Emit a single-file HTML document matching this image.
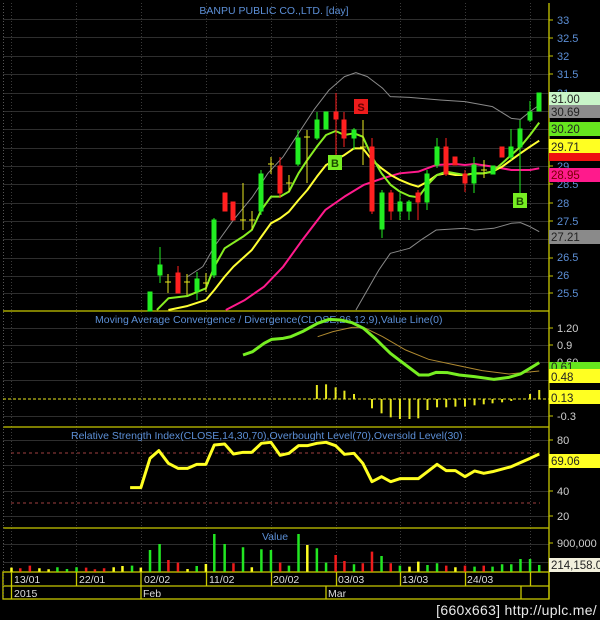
<!DOCTYPE html>
<html><head><meta charset="utf-8"><style>
html,body{margin:0;padding:0;background:#000;width:600px;height:620px;overflow:hidden}
svg{display:block}
text{font-family:"Liberation Sans",sans-serif}
</style></head><body>
<svg width="600" height="620" viewBox="0 0 600 620" xmlns="http://www.w3.org/2000/svg">
<rect width="600" height="620" fill="#000"/>
<g stroke="#2e2e2e" stroke-width="1">
<line x1="3" x2="549" y1="19.5" y2="19.5"/><line x1="3" x2="549" y1="37.5" y2="37.5"/><line x1="3" x2="549" y1="56.5" y2="56.5"/><line x1="3" x2="549" y1="74.5" y2="74.5"/><line x1="3" x2="549" y1="93.5" y2="93.5"/><line x1="3" x2="549" y1="111.5" y2="111.5"/><line x1="3" x2="549" y1="129.5" y2="129.5"/><line x1="3" x2="549" y1="148.5" y2="148.5"/><line x1="3" x2="549" y1="166.5" y2="166.5"/><line x1="3" x2="549" y1="184.5" y2="184.5"/><line x1="3" x2="549" y1="203.5" y2="203.5"/><line x1="3" x2="549" y1="221.5" y2="221.5"/><line x1="3" x2="549" y1="239.5" y2="239.5"/><line x1="3" x2="549" y1="258.5" y2="258.5"/><line x1="3" x2="549" y1="276.5" y2="276.5"/><line x1="3" x2="549" y1="293.5" y2="293.5"/>
<line x1="3" x2="549" y1="328.5" y2="328.5"/><line x1="3" x2="549" y1="345.5" y2="345.5"/><line x1="3" x2="549" y1="362.5" y2="362.5"/><line x1="3" x2="549" y1="380.5" y2="380.5"/><line x1="3" x2="549" y1="416.5" y2="416.5"/>
<line x1="3" x2="549" y1="440.5" y2="440.5"/><line x1="3" x2="549" y1="465.5" y2="465.5"/><line x1="3" x2="549" y1="491.5" y2="491.5"/><line x1="3" x2="549" y1="516.5" y2="516.5"/>
<line x1="3" x2="549" y1="544.5" y2="544.5"/><line x1="3" x2="549" y1="562.5" y2="562.5"/>
</g>
<g stroke="#3a3a3a" stroke-width="1" stroke-dasharray="1,2">
<line x1="11.5" x2="11.5" y1="3" y2="572"/><line x1="76.5" x2="76.5" y1="3" y2="572"/><line x1="141.5" x2="141.5" y1="3" y2="572"/><line x1="206.5" x2="206.5" y1="3" y2="572"/><line x1="271.5" x2="271.5" y1="3" y2="572"/><line x1="336.5" x2="336.5" y1="3" y2="572"/><line x1="400.5" x2="400.5" y1="3" y2="572"/><line x1="465.5" x2="465.5" y1="3" y2="572"/><line x1="530.5" x2="530.5" y1="3" y2="572"/>
</g>
<g stroke="#c8c800" stroke-width="1.3" fill="none">
<line x1="3" x2="549" y1="311" y2="311"/><line x1="3" x2="549" y1="427" y2="427"/><line x1="3" x2="549" y1="528" y2="528"/>
<rect x="3" y="572" width="546" height="27"/><line x1="3" x2="549" y1="586" y2="586"/>
<line x1="549" x2="549" y1="3" y2="599"/>
<line x1="11.5" x2="11.5" y1="572" y2="599"/><line x1="76.5" x2="76.5" y1="572" y2="586"/><line x1="141" x2="141" y1="572" y2="599"/><line x1="206.5" x2="206.5" y1="572" y2="586"/><line x1="271.5" x2="271.5" y1="572" y2="586"/><line x1="326" x2="326" y1="586" y2="599"/><line x1="336.5" x2="336.5" y1="572" y2="586"/><line x1="400.5" x2="400.5" y1="572" y2="586"/><line x1="465.5" x2="465.5" y1="572" y2="586"/><line x1="521" x2="521" y1="586" y2="599"/><line x1="530.5" x2="530.5" y1="572" y2="586"/>
</g>
<line x1="3.5" x2="3.5" y1="3" y2="599" stroke="#555" stroke-dasharray="1,2"/>
<g stroke="#c8c800" stroke-width="1">
<line x1="549" x2="553" y1="20" y2="20"/><line x1="549" x2="553" y1="38" y2="38"/><line x1="549" x2="553" y1="56" y2="56"/><line x1="549" x2="553" y1="74" y2="74"/><line x1="549" x2="553" y1="93" y2="93"/><line x1="549" x2="553" y1="111" y2="111"/><line x1="549" x2="553" y1="129" y2="129"/><line x1="549" x2="553" y1="148" y2="148"/><line x1="549" x2="553" y1="166" y2="166"/><line x1="549" x2="553" y1="184" y2="184"/><line x1="549" x2="553" y1="203" y2="203"/><line x1="549" x2="553" y1="221" y2="221"/><line x1="549" x2="553" y1="239" y2="239"/><line x1="549" x2="553" y1="258" y2="258"/><line x1="549" x2="553" y1="276" y2="276"/><line x1="549" x2="553" y1="293" y2="293"/>
<line x1="549" x2="553" y1="328" y2="328"/><line x1="549" x2="553" y1="345" y2="345"/><line x1="549" x2="553" y1="416" y2="416"/><line x1="549" x2="553" y1="440" y2="440"/><line x1="549" x2="553" y1="491" y2="491"/><line x1="549" x2="553" y1="516" y2="516"/><line x1="549" x2="553" y1="543" y2="543"/>
</g>
<text x="274" y="14" fill="#5c8fd6" font-size="10.5" text-anchor="middle">BANPU PUBLIC CO.,LTD. [day]</text>
<g fill="#5c8fd6" font-size="11">
<text x="557" y="24">33</text><text x="557" y="42">32.5</text><text x="557" y="60">32</text><text x="557" y="78">31.5</text><text x="557" y="97">31</text><text x="557" y="188">28.5</text><text x="557" y="207">28</text><text x="557" y="225">27.5</text><text x="557" y="261">26.5</text><text x="557" y="279">26</text><text x="557" y="297">25.5</text><text x="557" y="170">29</text>
</g>
<g transform="scale(0.3827,0.3333)" fill="none" stroke-linejoin="round">
<polyline stroke="#8a8a8a" stroke-width="1" vector-effect="non-scaling-stroke" points="490,830 530,800 560,740 610,660 660,590 700,520 740,470 780,400 820,330 860,270 900,230 930,218 960,230 1000,265 1020,290 1070,292 1100,295 1150,300 1215,305 1287,320 1336,355 1360,358 1385,335 1409,315"/>
<polyline stroke="#8a8a8a" stroke-width="1" vector-effect="non-scaling-stroke" points="930,930 960,870 990,810 1020,760 1070,745 1100,720 1140,690 1215,685 1240,690 1290,685 1336,670 1360,668 1385,680 1409,695"/>
<polyline stroke="#ff1a8c" stroke-width="2" vector-effect="non-scaling-stroke" points="590,930 640,900 690,860 740,800 790,720 850,630 900,590 950,555 1000,535 1045,520 1093,515 1140,495 1190,492 1215,495 1240,492 1287,500 1336,510 1385,510 1409,505"/>
<polyline stroke="#ffff33" stroke-width="2" vector-effect="non-scaling-stroke" points="440,930 490,918 538,900 560,870 587,830 610,800 658,750 683,710 708,670 732,655 755,635 780,600 803,570 828,530 852,495 877,480 900,465 925,445 948,445 972,480 997,505 1021,525 1045,540 1070,552 1093,560 1117,545 1142,525 1166,520 1190,525 1215,525 1240,520 1264,520 1287,515 1312,500 1336,480 1360,460 1385,440 1409,422"/>
<polyline stroke="#88ee22" stroke-width="2" vector-effect="non-scaling-stroke" points="410,930 440,895 490,888 538,865 560,800 587,745 635,710 658,690 683,630 708,590 732,590 755,575 780,520 803,480 828,440 852,405 877,393 900,405 925,400 948,410 972,470 997,520 1021,555 1045,575 1070,588 1093,592 1117,555 1142,525 1166,515 1190,520 1215,525 1240,520 1264,520 1287,515 1312,490 1336,465 1360,440 1385,405 1409,368"/>
</g>
<g stroke-width="1">
<g stroke="#22ee22" fill="#22ee22">
<rect x="148" y="292" width="4" height="19"/>
<line x1="160" x2="160" y1="247" y2="283"/><rect x="158" y="265" width="4" height="10"/>
<line x1="197" x2="197" y1="272" y2="300"/><rect x="195" y="279" width="4" height="12"/>
<line x1="214" x2="214" y1="218" y2="278"/><rect x="212" y="220" width="4" height="55"/>
<line x1="261" x2="261" y1="170" y2="215"/><rect x="259" y="174" width="4" height="37"/>
<line x1="298" x2="298" y1="130" y2="166"/><rect x="296" y="138" width="4" height="26"/>
<line x1="317" x2="317" y1="112" y2="140"/><rect x="315" y="120" width="4" height="18"/>
<rect x="324" y="112" width="4" height="17"/>
<line x1="354" x2="354" y1="128" y2="150"/><rect x="352" y="130" width="4" height="8"/>
<line x1="382" x2="382" y1="190" y2="238"/><rect x="380" y="193" width="4" height="36"/>
<line x1="400" x2="400" y1="193" y2="220"/><rect x="398" y="202" width="4" height="9"/>
<line x1="409" x2="409" y1="200" y2="220"/><rect x="407" y="202" width="4" height="9"/>
<line x1="427" x2="427" y1="170" y2="210"/><rect x="425" y="174" width="4" height="28"/>
<line x1="437" x2="437" y1="138" y2="168"/><rect x="435" y="147" width="4" height="18"/>
<line x1="474" x2="474" y1="157" y2="193"/><rect x="472" y="165" width="4" height="18"/>
<rect x="491" y="166" width="4" height="8"/>
<line x1="511" x2="511" y1="129" y2="160"/><rect x="509" y="147" width="4" height="10"/>
<line x1="520" x2="520" y1="120" y2="207"/><rect x="518" y="129" width="4" height="18"/>
<line x1="530" x2="530" y1="101" y2="122"/><rect x="528" y="112" width="4" height="8"/>
<rect x="537" y="93" width="4" height="18"/>
</g>
<g stroke="#ff2020" fill="#ff2020">
<line x1="178" x2="178" y1="266" y2="293"/><rect x="176" y="273" width="4" height="20"/>
<rect x="223" y="193" width="4" height="18"/>
<rect x="231" y="202" width="4" height="18"/>
<line x1="280" x2="280" y1="157" y2="198"/><rect x="278" y="166" width="4" height="27"/>
<line x1="336" x2="336" y1="93" y2="167"/><rect x="334" y="112" width="4" height="7"/>
<line x1="344" x2="344" y1="112" y2="147"/><rect x="342" y="120" width="4" height="18"/>
<line x1="372" x2="372" y1="138" y2="214"/><rect x="370" y="147" width="4" height="64"/>
<line x1="391" x2="391" y1="190" y2="220"/><rect x="389" y="193" width="4" height="18"/>
<line x1="418" x2="418" y1="190" y2="220"/><rect x="416" y="193" width="4" height="9"/>
<line x1="446" x2="446" y1="138" y2="176"/><rect x="444" y="147" width="4" height="27"/>
<rect x="453" y="157" width="4" height="8"/>
<line x1="465" x2="465" y1="170" y2="192"/><rect x="463" y="174" width="4" height="9"/>
<rect x="500" y="147" width="4" height="10"/>
</g>
<g stroke="#e8e820">
<line x1="168" x2="168" y1="274" y2="293"/><line x1="165" x2="171" y1="282" y2="282"/>
<line x1="187" x2="187" y1="274" y2="295"/><line x1="184" x2="190" y1="282" y2="282"/>
<line x1="206" x2="206" y1="273" y2="292"/><line x1="203" x2="209" y1="283" y2="283"/>
<line x1="243" x2="243" y1="183" y2="230"/><line x1="240" x2="246" y1="220" y2="220"/>
<line x1="252" x2="252" y1="211" y2="230"/><line x1="249" x2="255" y1="220" y2="220"/>
<line x1="271" x2="271" y1="157" y2="174"/><line x1="268" x2="274" y1="164" y2="164"/>
<line x1="289" x2="289" y1="175" y2="192"/><line x1="286" x2="292" y1="183" y2="183"/>
<line x1="307" x2="307" y1="130" y2="183"/><line x1="304" x2="310" y1="137" y2="137"/>
<line x1="363" x2="363" y1="120" y2="165"/><line x1="360" x2="366" y1="147" y2="147"/>
<line x1="484" x2="484" y1="160" y2="178"/><line x1="481" x2="487" y1="170" y2="170"/>
</g>
</g>
<rect x="354" y="99" width="14" height="15" fill="#ee1c1c"/><text x="361" y="111" fill="#600" font-size="11" text-anchor="middle" font-weight="bold">S</text>
<rect x="328" y="155" width="14" height="15" fill="#77ee22"/><text x="335" y="167" fill="#1b4a00" font-size="11" text-anchor="middle" font-weight="bold">B</text>
<rect x="513" y="193" width="14" height="15" fill="#77ee22"/><text x="520" y="205" fill="#1b4a00" font-size="11" text-anchor="middle" font-weight="bold">B</text>
<g font-size="11.5">
<rect x="549" y="92" width="51" height="13" fill="#c8f5c8"/><text x="551" y="103" fill="#222">31.00</text>
<rect x="549" y="105" width="51" height="13" fill="#8c8c8c"/><text x="551" y="116" fill="#222">30.69</text>
<rect x="549" y="122" width="51" height="14" fill="#66e61e"/><text x="551" y="133" fill="#222">30.20</text>
<rect x="549" y="139" width="51" height="14" fill="#ffff22"/><text x="551" y="151" fill="#222">29.71</text>
<rect x="549" y="153" width="51" height="8" fill="#ee1111"/>
<rect x="549" y="168" width="51" height="14" fill="#ff1a8c"/><text x="551" y="179" fill="#700">28.95</text>
<rect x="549" y="230" width="51" height="14" fill="#8a8a8a"/><text x="551" y="241" fill="#222">27.21</text>
</g>
<text x="95" y="323" fill="#5c8fd6" font-size="10.5">Moving Average Convergence / Divergence(CLOSE,26,12,9),Value Line(0)</text>
<line x1="3" x2="549" y1="399" y2="399" stroke="#e8e820" stroke-dasharray="3,2"/>
<g transform="translate(0,300) scale(0.3827,0.3333)" fill="none">
<g stroke="#e8e820" stroke-width="2">
<line x1="828" x2="828" y1="297" y2="255" vector-effect="non-scaling-stroke"/><line x1="852" x2="852" y1="297" y2="253" vector-effect="non-scaling-stroke"/><line x1="877" x2="877" y1="297" y2="262" vector-effect="non-scaling-stroke"/><line x1="900" x2="900" y1="297" y2="272" vector-effect="non-scaling-stroke"/><line x1="925" x2="925" y1="297" y2="282" vector-effect="non-scaling-stroke"/>
<line x1="972" x2="972" y1="297" y2="325" vector-effect="non-scaling-stroke"/><line x1="997" x2="997" y1="297" y2="340" vector-effect="non-scaling-stroke"/><line x1="1021" x2="1021" y1="297" y2="352" vector-effect="non-scaling-stroke"/><line x1="1045" x2="1045" y1="297" y2="357" vector-effect="non-scaling-stroke"/><line x1="1070" x2="1070" y1="297" y2="357" vector-effect="non-scaling-stroke"/><line x1="1093" x2="1093" y1="297" y2="355" vector-effect="non-scaling-stroke"/><line x1="1117" x2="1117" y1="297" y2="330" vector-effect="non-scaling-stroke"/><line x1="1142" x2="1142" y1="297" y2="322" vector-effect="non-scaling-stroke"/><line x1="1166" x2="1166" y1="297" y2="322" vector-effect="non-scaling-stroke"/><line x1="1190" x2="1190" y1="297" y2="320" vector-effect="non-scaling-stroke"/><line x1="1215" x2="1215" y1="297" y2="320" vector-effect="non-scaling-stroke"/><line x1="1240" x2="1240" y1="297" y2="316" vector-effect="non-scaling-stroke"/><line x1="1264" x2="1264" y1="297" y2="313" vector-effect="non-scaling-stroke"/><line x1="1287" x2="1287" y1="297" y2="310" vector-effect="non-scaling-stroke"/><line x1="1312" x2="1312" y1="297" y2="307" vector-effect="non-scaling-stroke"/><line x1="1336" x2="1336" y1="297" y2="303" vector-effect="non-scaling-stroke"/><line x1="1385" x2="1385" y1="297" y2="282" vector-effect="non-scaling-stroke"/><line x1="1409" x2="1409" y1="297" y2="270" vector-effect="non-scaling-stroke"/>
</g>
<polyline stroke="#b08a30" stroke-width="1" vector-effect="non-scaling-stroke" points="830,110 870,95 920,82 950,82 1000,110 1060,150 1120,178 1190,195 1260,212 1330,222 1409,213"/>
<polyline stroke="#77ee22" stroke-width="3" stroke-linejoin="round" vector-effect="non-scaling-stroke" points="635,165 660,155 690,130 710,118 740,115 760,110 790,95 830,70 860,58 890,60 920,68 950,85 980,115 1020,160 1060,195 1095,225 1120,225 1140,217 1170,218 1200,225 1240,230 1290,238 1330,232 1360,222 1385,205 1409,188"/>
</g>
<g font-size="11" fill="#cfcfcf">
<text x="557" y="332">1.20</text><text x="557" y="349">0.9</text><text x="557" y="366">0.60</text><text x="557" y="420">-0.3</text>
<text x="557" y="444">80</text><text x="557" y="495">40</text><text x="557" y="520">20</text><text x="557" y="547">900,000</text>
</g>
<g font-size="11.5">
<rect x="549" y="362" width="51" height="9" fill="#66e61e"/><text x="551" y="371" fill="#222">0.61</text>
<rect x="549" y="369" width="51" height="14" fill="#ffff22"/><text x="551" y="381" fill="#222">0.48</text>
<rect x="549" y="390" width="51" height="14" fill="#ffff22"/><text x="551" y="402" fill="#222">0.13</text>
<rect x="549" y="454" width="51" height="14" fill="#ffff22"/><text x="551" y="465" fill="#222">69.06</text>
<rect x="549" y="558" width="51" height="14" fill="#f2f0dc"/><text x="551" y="569" fill="#222">214,158.0</text>
</g>
<text x="71" y="439" fill="#5c8fd6" font-size="10.5">Relative Strength Index(CLOSE,14,30,70),Overbought Level(70),Oversold Level(30)</text>
<line x1="11" x2="540" y1="453" y2="453" stroke="#a04040" stroke-dasharray="3,3"/>
<line x1="11" x2="540" y1="503" y2="503" stroke="#a04040" stroke-dasharray="3,3"/>
<g transform="translate(0,300) scale(0.3827,0.3333)">
<polyline fill="none" stroke="#ffff22" stroke-width="3" stroke-linejoin="round" vector-effect="non-scaling-stroke" points="340,563 368,563 392,475 415,452 440,490 465,505 490,505 514,493 538,493 560,435 587,432 610,462 635,457 658,457 683,430 708,427 732,466 755,460 780,437 803,437 828,430 852,427 877,437 900,463 925,460 948,490 972,545 997,530 1021,545 1045,536 1070,536 1093,536 1117,515 1142,493 1166,512 1190,512 1215,530 1240,513 1264,520 1287,515 1336,500 1385,475 1409,462"/>
</g>
<text x="275" y="540" fill="#5c8fd6" font-size="10.5" text-anchor="middle">Value</text>
<g transform="translate(0,300) scale(0.3827,0.3333)" stroke-width="2.5">
<g stroke="#ffff22"><path vector-effect="non-scaling-stroke" d="M30 815V803M103 815V805M127 815V808M297 815V802M320 815V798M368 815V803M490 815V807M538 815V792M658 815V802M803 815V735M1070 815V800M1093 815V785M1190 815V802"/></g>
<g stroke="#ee1c1c"><path vector-effect="non-scaling-stroke" d="M53 815V805M78 815V797M225 815V803M248 815V808M272 815V805M440 815V780M465 815V788M610 815V790M732 815V788M877 815V765M900 815V783M948 815V790M972 815V755M1021 815V790M1166 815V797M1215 815V797M1264 815V797"/></g>
<g stroke="#22e622"><path vector-effect="non-scaling-stroke" d="M150 815V802M175 815V807M200 815V802M345 815V797M392 815V750M417 815V732M514 815V798M560 815V702M587 815V732M635 815V742M683 815V748M708 815V750M755 815V797M780 815V702M828 815V745M852 815V788M925 815V793M997 815V768M1045 815V797M1117 815V795M1142 815V790M1240 815V800M1287 815V800M1312 815V793M1336 815V793M1360 815V777M1385 815V777M1409 815V795"/></g>
</g>
<g fill="#dcdcdc" font-size="10.5">
<text x="14" y="583">13/01</text><text x="79" y="583">22/01</text><text x="144" y="583">02/02</text><text x="209" y="583">11/02</text><text x="273" y="583">20/02</text><text x="338" y="583">03/03</text><text x="402" y="583">13/03</text><text x="467" y="583">24/03</text>
<text x="14" y="597">2015</text><text x="143" y="597">Feb</text><text x="328" y="597">Mar</text>
</g>
<text x="597" y="615" fill="#e8e8e8" font-size="14" text-anchor="end" letter-spacing="0.3">[660x663] http://uplc.me/</text>
</svg>
</body></html>
